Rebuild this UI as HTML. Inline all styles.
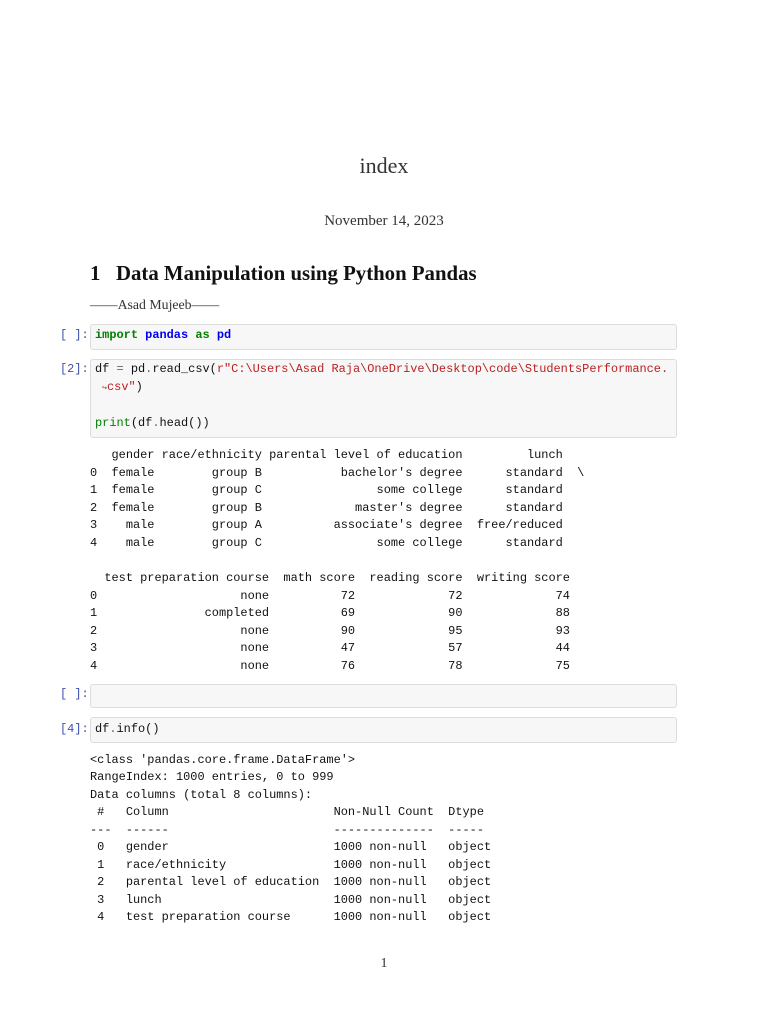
<!DOCTYPE html>
<html><head><meta charset="utf-8"><style>
body{margin:0;width:768px;height:1024px;background:#fff;position:relative;overflow:hidden;color:#111}
.a{position:absolute;white-space:pre}
.serif{font-family:"Liberation Serif",serif}
.mono{font-family:"Liberation Mono",monospace;font-size:11.95px;line-height:17.6px}
.box{position:absolute;left:90px;width:587px;background:#f7f7f7;border:1px solid #dcdcdc;border-radius:3px;box-sizing:border-box}
.p{color:#3e4fb0}
.k{color:#008000;font-weight:bold}
.b{color:#0000ee;font-weight:bold}
.s{color:#ba2121}
.g{color:#008000}
.o{color:#666}
</style></head><body>
<div class="a serif" style="left:0;width:768px;text-align:center;top:153px;font-size:22px;color:#333">index</div>
<div class="a serif" style="left:0;width:768px;text-align:center;top:213px;font-size:15px;color:#333">November 14, 2023</div>
<div class="a serif" style="left:90px;top:262px;font-size:20.8px;font-weight:bold">1&nbsp;&nbsp;&nbsp;Data Manipulation using Python Pandas</div>
<div class="a serif" style="left:90px;top:297px;font-size:13.8px;color:#333">——Asad Mujeeb——</div>

<div class="a mono p" style="left:60px;top:327px">[ ]:</div>
<div class="box" style="top:324px;height:26px"></div>
<div class="a mono" style="left:95px;top:327px"><span class="k">import</span> <span class="b">pandas</span> <span class="k">as</span> <span class="b">pd</span></div>

<div class="a mono p" style="left:60px;top:361px">[2]:</div>
<div class="box" style="top:359px;height:79px"></div>
<div class="a mono" style="left:95px;top:361px">df <span class="o">=</span> pd<span class="o">.</span>read_csv(<span class="s">r"C:\Users\Asad Raja\OneDrive\Desktop\code\StudentsPerformance.</span>
<span class="s"> <span style="font-size:8px">↪</span>csv"</span>)

<span class="g">print</span>(df<span class="o">.</span>head())</div>

<div class="a mono" style="left:90px;top:447px">   gender race/ethnicity parental level of education         lunch
0  female        group B           bachelor's degree      standard  \
1  female        group C                some college      standard
2  female        group B             master's degree      standard
3    male        group A          associate's degree  free/reduced
4    male        group C                some college      standard</div>

<div class="a mono" style="left:90px;top:570px">  test preparation course  math score  reading score  writing score
0                    none          72             72             74
1               completed          69             90             88
2                    none          90             95             93
3                    none          47             57             44
4                    none          76             78             75</div>

<div class="a mono p" style="left:60px;top:686px">[ ]:</div>
<div class="box" style="top:684px;height:24px"></div>

<div class="a mono p" style="left:60px;top:721px">[4]:</div>
<div class="box" style="top:717px;height:26px"></div>
<div class="a mono" style="left:95px;top:721px">df<span class="o">.</span>info()</div>

<div class="a mono" style="left:90px;top:752px;line-height:17.45px">&lt;class 'pandas.core.frame.DataFrame'&gt;
RangeIndex: 1000 entries, 0 to 999
Data columns (total 8 columns):
 #   Column                       Non-Null Count  Dtype
---  ------                       --------------  -----
 0   gender                       1000 non-null   object
 1   race/ethnicity               1000 non-null   object
 2   parental level of education  1000 non-null   object
 3   lunch                        1000 non-null   object
 4   test preparation course      1000 non-null   object</div>

<div class="a serif" style="left:0;width:768px;text-align:center;top:956px;font-size:14px;color:#333">1</div>
</body></html>
